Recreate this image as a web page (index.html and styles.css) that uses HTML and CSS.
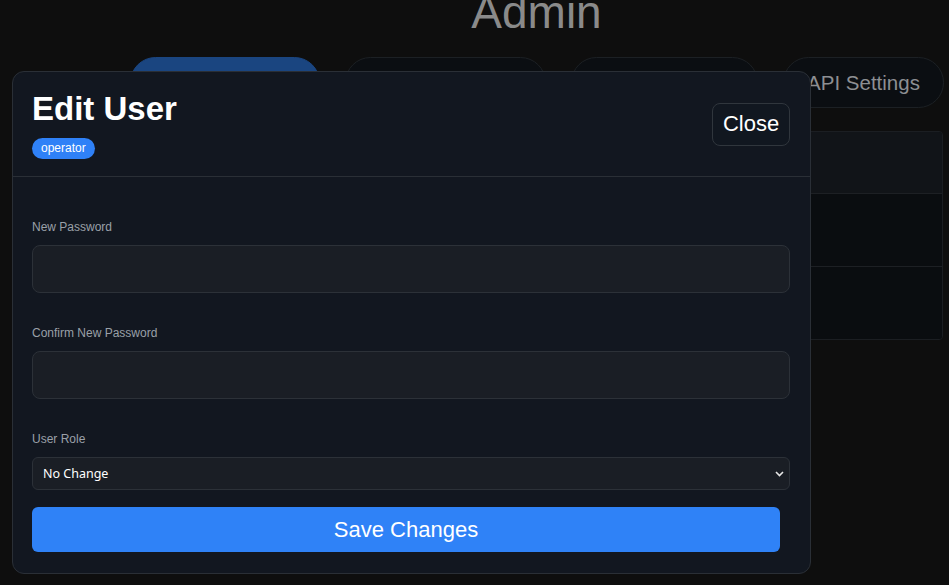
FILE: index.html
```html
<!DOCTYPE html>
<html lang="en">
<head>
<meta charset="utf-8">
<title>Admin - Edit User</title>
<link rel="stylesheet" href="styles.css">
</head>
<body>
<div class="page">
  <h1 class="page-title">Admin</h1>
  <nav class="tabs">
    <div class="tab tab-active">User Management</div>
    <div class="tab">Sessions</div>
    <div class="tab">Audit Log</div>
    <div class="tab">API Settings</div>
  </nav>
  <div class="table">
    <div class="row row-head"></div>
    <div class="row"></div>
    <div class="row"></div>
  </div>
</div>

<div class="modal">
  <div class="modal-header">
    <div class="modal-heading">
      <h2 class="modal-title">Edit User</h2>
      <span class="badge">operator</span>
    </div>
    <button class="btn-close" type="button">Close</button>
  </div>
  <form class="modal-body">
    <div class="field">
      <label class="field-label">New Password</label>
      <input class="field-input" type="password">
    </div>
    <div class="field">
      <label class="field-label">Confirm New Password</label>
      <input class="field-input" type="password">
    </div>
    <div class="field field-last">
      <label class="field-label">User Role</label>
      <div class="select-wrap">
        <select class="field-select">
          <option>No Change</option>
          <option>admin</option>
          <option>operator</option>
          <option>viewer</option>
        </select>
        <svg class="chevron" width="9" height="6" viewBox="0 0 9 6"><path d="M1 1 L4.5 4.5 L8 1" fill="none" stroke="#e6e6e6" stroke-width="1.6"/></svg>
      </div>
    </div>
    <button class="btn-save" type="button">Save Changes</button>
  </form>
</div>
</body>
</html>
```
FILE: styles.css
```css
html, body {
  margin: 0;
  padding: 0;
  background: #0e0e0e;
  font-family: "Liberation Sans", Arial, sans-serif;
  overflow: hidden;
}

.page {
  width: 949px;
  height: 585px;
  box-sizing: border-box;
  padding: 0 6px 0 130px;
}

.page-title {
  margin: -14px 0 0;
  font-size: 46px;
  font-weight: 400;
  line-height: 53px;
  color: #8a8a8a;
  text-align: center;
}

.tabs {
  display: grid;
  grid-template-columns: 190px 201px 187px 161px;
  column-gap: 25px;
  margin-top: 18px;
}

.tab {
  height: 51px;
  box-sizing: border-box;
  border: 1px solid #1c2024;
  border-radius: 26px;
  background: #0b0e12;
  color: #8d8f92;
  font-size: 20.5px;
  display: flex;
  align-items: center;
  justify-content: center;
  white-space: nowrap;
  overflow: hidden;
}

.tab-active {
  background: #1a4580;
  border-color: #1a4580;
}

.table {
  margin-top: 23px;
  border: 1px solid #1b1e22;
  border-radius: 4px;
  overflow: hidden;
}

.row {
  height: 72px;
  background: #0a0d10;
  border-top: 1px solid #1d2024;
}

.row-head {
  height: 61px;
  background: #111418;
  border-top: none;
}

/* Modal */
.modal {
  position: absolute;
  left: 12px;
  top: 71px;
  width: 799px;
  box-sizing: border-box;
  background: #121720;
  border: 1px solid #2a2f36;
  border-radius: 12px;
}

.modal-header {
  display: flex;
  justify-content: space-between;
  align-items: center;
  padding: 18px 20px 17px 19px;
  border-bottom: 1px solid #2a2f36;
}

.modal-heading {
  display: flex;
  flex-direction: column;
  align-items: flex-start;
}

.modal-title {
  margin: 0;
  font-size: 33px;
  font-weight: 700;
  line-height: 38px;
  color: #ffffff;
}

.badge {
  margin-top: 10px;
  padding: 0 9px;
  height: 21px;
  line-height: 21px;
  border-radius: 11px;
  background: #2f81f7;
  color: #ffffff;
  font-size: 12px;
}

.btn-close {
  width: 78px;
  height: 43px;
  padding: 0 0 2px;
  background: #111720;
  border: 1px solid #30363d;
  border-radius: 8px;
  color: #ffffff;
  font-family: "Liberation Sans", Arial, sans-serif;
  font-size: 22px;
}

.modal-body {
  margin: 0;
  padding: 43px 20px 21px 19px;
}

.field {
  margin-bottom: 33px;
}

.field-last {
  margin-bottom: 17px;
}

.field-label {
  display: block;
  font-size: 12px;
  line-height: 14px;
  color: #9aa0a8;
  margin-bottom: 11px;
}

.field-input {
  display: block;
  width: 100%;
  height: 48px;
  box-sizing: border-box;
  background: #1a1e25;
  border: 1px solid #2c3138;
  border-radius: 8px;
  color: #ffffff;
  outline: none;
}

.select-wrap {
  position: relative;
}

.field-select {
  display: block;
  width: 100%;
  height: 33px;
  box-sizing: border-box;
  padding: 0 10px;
  background: #1a1e25;
  border: 1px solid #2c3138;
  border-radius: 6px;
  color: #ffffff;
  font-family: "Noto Sans", "Open Sans", sans-serif;
  font-size: 12.5px;
  appearance: none;
  -webkit-appearance: none;
  outline: none;
}

.chevron {
  position: absolute;
  right: 6px;
  top: 14px;
  pointer-events: none;
}

.btn-save {
  display: block;
  width: 748px;
  height: 45px;
  padding: 0;
  background: #2f82f7;
  border: none;
  border-radius: 6px;
  color: #ffffff;
  font-family: "Liberation Sans", Arial, sans-serif;
  font-size: 22px;
}
```
